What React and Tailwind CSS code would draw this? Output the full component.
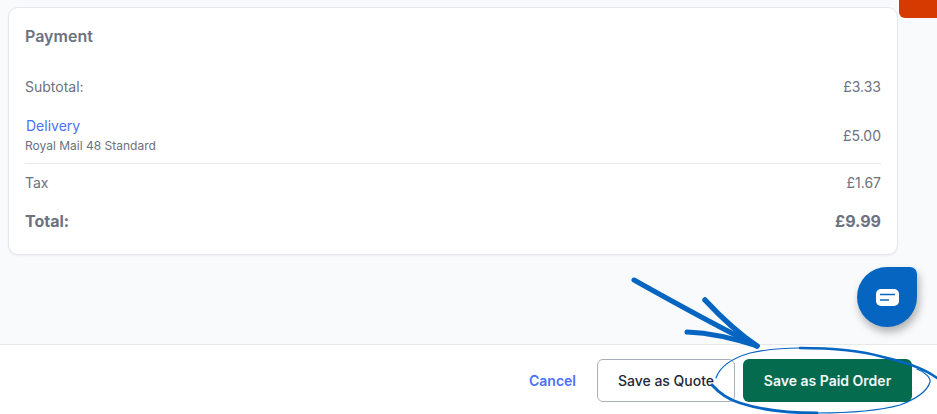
import React from 'react';

const Row = ({ label, value }) => (
    <div className="flex justify-between items-center text-[14px] leading-[20px] text-[#6b7280]">
        <span>{label}</span>
        <span>{value}</span>
    </div>
);

const App = () => {
    return (
        <div className="relative w-[937px] h-[414px] overflow-hidden bg-[#f9fafc] flex flex-col font-['Inter',sans-serif]">
            <div className="flex-1 pt-[7px] pl-[8px] pr-[39px]">
                <div className="h-[248px] bg-white rounded-[10px] border border-[#e5e7eb] shadow-[0_1px_2px_rgba(0,0,0,0.05)] pt-[17px] px-[16px]">
                    <h2 className="text-[16px] leading-[22px] font-semibold text-[#6b7280]">Payment</h2>
                    <div className="mt-[30px]">
                        <Row label="Subtotal:" value="£3.33" />
                    </div>
                    <div className="mt-[19px] pb-[8px] border-b border-[#e5e7eb] flex justify-between items-center">
                        <div>
                            <div className="text-[14px] leading-[20px] text-[#4a72f8] pl-px">Delivery</div>
                            <div className="text-[12px] leading-[18px] text-[#6b7280] pt-px">Royal Mail 48 Standard</div>
                        </div>
                        <span className="text-[14px] text-[#6b7280]">£5.00</span>
                    </div>
                    <div className="mt-[9px]">
                        <Row label="Tax" value="£1.67" />
                    </div>
                    <div className="mt-[17px] flex justify-between items-center text-[16px] leading-[22px] font-bold text-[#6b7280]">
                        <span>Total:</span>
                        <span>£9.99</span>
                    </div>
                </div>
            </div>

            <footer className="h-[70px] bg-white border-t border-[#e5e7eb] flex items-center justify-end gap-[21px] pr-[25px] pt-[2px]">
                <button className="text-[14px] font-semibold text-[#4a72f8]">Cancel</button>
                <div className="flex items-center gap-[8px]">
                    <button className="h-[43px] w-[138px] rounded-[6px] border border-[#a9afba] bg-white text-[14px] font-medium text-[#1f2937]">Save as Quote</button>
                    <button className="h-[43px] w-[169px] rounded-[6px] bg-[#056b4e] text-[14px] font-semibold text-[#f3f7f5]">Save as Paid Order</button>
                </div>
            </footer>

            {/* corner of the orange element */}
            <div className="absolute top-0 right-0 w-[38px] h-[18px] bg-[#d63a00] rounded-bl-[6px]" />

            {/* chat bubble */}
            <button className="absolute left-[857px] top-[267px] w-[60px] h-[60px] flex items-center justify-center bg-[#0565c1] rounded-[30px] rounded-tr-[7px] shadow-[2px_5px_8px_rgba(0,0,0,0.3)]">
                <svg width="23" height="17" viewBox="0 0 23 17">
                    <path d="M5 0h13a5 5 0 0 1 5 5v7a5 5 0 0 1-5 5H5a5 5 0 0 1-5-5V5a5 5 0 0 1 5-5z" fill="#fff" />
                    <path d="M4 5.500h15M4 11h9" stroke="#0565c1" strokeWidth="1.500" fill="none" />
                </svg>
            </button>

            {/* hand drawn arrow and ellipse */}
            <svg className="absolute inset-0 pointer-events-none" width="937" height="414" viewBox="0 0 937 414" fill="none">
                <g stroke="#0565c1" strokeLinecap="round" strokeLinejoin="round">
                    <path d="M634 280 C675 303 715 325 757 346" strokeWidth="5" />
                    <path d="M705 300 C718 314 735 331 757 346" strokeWidth="5.500" />
                    <path d="M687 332 C712 333 736 339 757 346" strokeWidth="5" />
                    <path d="M716 378 C720 366 733 358 750 353 C768 349 785 348 800 348" strokeWidth="1.200" />
                    <path d="M800 348 C835 348 862 351 883 357 C905 362 925 369 937 378" strokeWidth="2.500" />
                    <path d="M712 385 C720 394 730 400 740 403 C765 411 790 413 817 413" strokeWidth="2.800" />
                    <path d="M817 413 C850 413 878 411 900 405 C916 399 927 392 930 382 C931 378 925 372 917 369" strokeWidth="1.200" />
                </g>
            </svg>
        </div>
    );
};

export default App;
